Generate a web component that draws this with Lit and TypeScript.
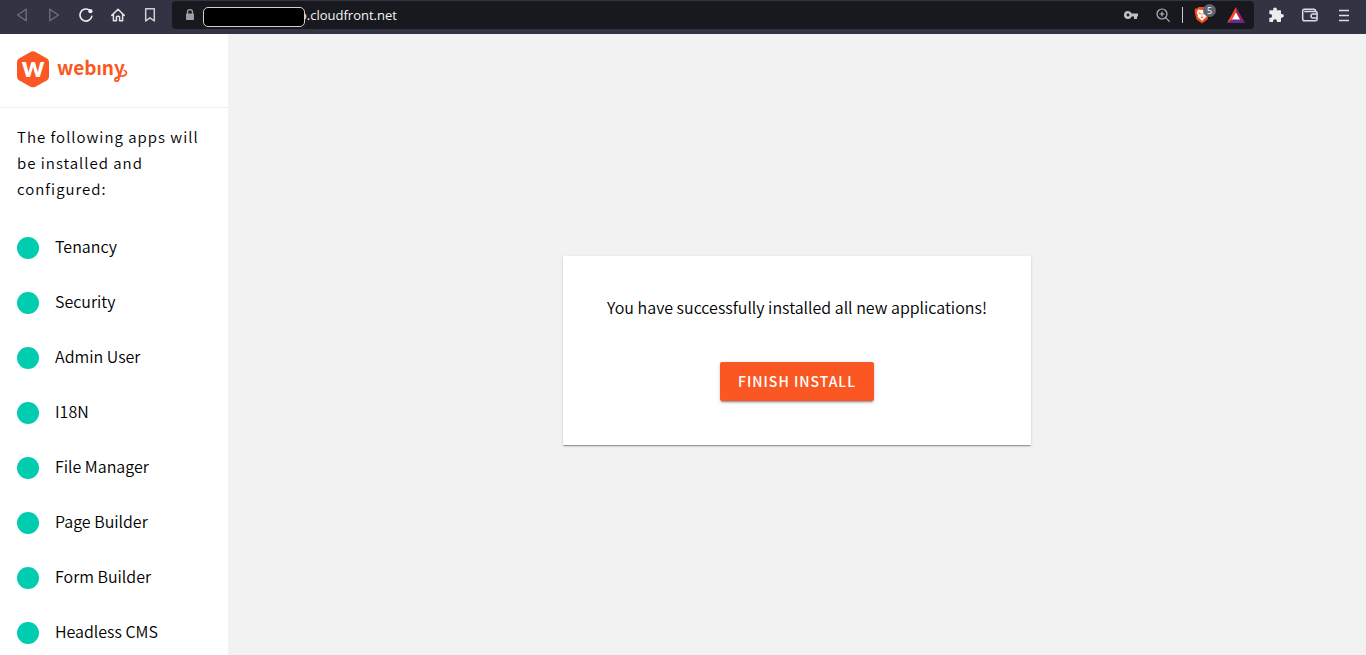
import { LitElement, html, css, svg } from "lit";
import { customElement } from "lit/decorators.js";

const icons = {
  back: svg`<svg width="20" height="20" viewBox="0 0 20 20"><path d="M14.2 4.2v11.6L5.6 10z" fill="none" stroke="#6f717c" stroke-width="1.3" stroke-linejoin="round"/></svg>`,
  forward: svg`<svg width="20" height="20" viewBox="0 0 20 20"><path d="M5.8 4.2v11.6l8.6-5.8z" fill="none" stroke="#6f717c" stroke-width="1.3" stroke-linejoin="round"/></svg>`,
  reload: svg`<svg width="20" height="20" viewBox="0 0 20 20"><path d="M15.8 11.4A6 6 0 1 1 13 4.900" fill="none" stroke="#eeeef0" stroke-width="1.600" stroke-linecap="round"/><circle cx="14.400" cy="6.200" r="2.100" fill="#eeeef0"/></svg>`,
  home: svg`<svg width="20" height="20" viewBox="0 0 20 20"><path d="M3.8 10.4 10 4.3l6.2 6.1M5.4 9.4v6.4h3v-3.6q0-1 1-1h1.200q1 0 1 1v3.600h3V9.400" fill="none" stroke="#e4e4e7" stroke-width="1.5" stroke-linejoin="round" stroke-linecap="round"/></svg>`,
  bookmark: svg`<svg width="20" height="20" viewBox="0 0 20 20"><path d="M5.700 3.800h8.600v12.200L10 12.800 5.700 16z" fill="none" stroke="#cfcfd4" stroke-width="1.500" stroke-linejoin="round"/></svg>`,
  lock: svg`<svg width="12" height="14" viewBox="0 0 12 14"><path d="M3.500 6V4.200a2.500 2.500 0 0 1 5 0V6" fill="none" stroke="#9c9fa8" stroke-width="1.300"/><rect x="2" y="5.500" width="8" height="6.500" rx=".8" fill="#9c9fa8"/></svg>`,
  key: svg`<svg width="16" height="16" viewBox="0 0 16 16"><path fill-rule="evenodd" d="M5 4a4 4 0 1 0 3.700 5.400H11V12h3V9.400h1V6.600H8.700A4 4 0 0 0 5 4zm0 2.600a1.400 1.400 0 1 1 0 2.800 1.400 1.400 0 0 1 0-2.800z" fill="#bdbfc5"/></svg>`,
  zoom: svg`<svg width="16" height="16" viewBox="0 0 16 16"><g fill="none" stroke="#b4b6bc" stroke-width="1.200" stroke-linecap="round"><circle cx="7" cy="7" r="5"/><path d="M10.700 10.700 14.300 14.300M7 5v4M5 7h4"/></g></svg>`,
  shield: svg`<svg width="16" height="18" viewBox="0 0 16 18"><path d="M4.500 1h7L13 2.600l1.600-.1 1 2-.7 1.700.2 1-1.700 6.300L8 17.500l-5.400-4L.9 7.200l.2-1-.7-1.700 1-2 1.600.1z" fill="#fb4b12"/><path d="m4.200 3.600 3.800.5 3.800-.5 1.500 2.600-1.300 3.200.3 1.500-2.200 1.800L8 15l-2.100-2.300-2.200-1.800.3-1.500-1.300-3.200z" fill="#fff"/><path d="m4.600 6.800 2 .6-.5.900zM11.400 6.800l-2 .6.5.9zM8 7v3M6.800 11.200 8 10.700l1.200.5L8 12z" fill="#fb4b12" stroke="#fb4b12" stroke-width=".5"/></svg>`,
  bat: svg`<svg width="18" height="16" viewBox="0 0 18 16"><path d="M9 0 0 16l9-5z" fill="#ff4724"/><path d="m9 0 9 16-9-5z" fill="#9e1f63"/><path d="M0 16h18l-9-5.500z" fill="#662d91"/><path d="m9 5.500 4 7H5z" fill="#fff"/></svg>`,
  puzzle: svg`<svg width="18" height="18" viewBox="0 0 18 18"><path d="M3 4.200h3.400C5.800 2.700 6.700 1.500 8 1.500s2.300 1.200 1.700 2.700h3.600q.7 0 .7.700v3.200c1.600-.6 2.800.4 2.800 1.700s-1.200 2.300-2.800 1.700v3.800q0 .7-.7.700H9.800c.5-1.600-.5-2.700-1.800-2.700s-2.300 1.100-1.800 2.700H3q-.7 0-.7-.7v-3.500c1.600.5 2.700-.5 2.700-1.800S3.900 7.700 2.300 8.200V4.900q0-.7.700-.7z" fill="#ececee"/></svg>`,
  wallet: svg`<svg width="18" height="18" viewBox="0 0 18 18"><g fill="none" stroke="#dcdce0" stroke-width="1.500" stroke-linejoin="round"><path d="M14.500 5.500V4.800q0-1.600-1.600-1.600H3.200q-1.500 0-1.500 1.500v8.300q0 1.800 1.800 1.800h11q1.600 0 1.600-1.600V7.100q0-1.600-1.600-1.600H3.200"/><path d="M16 8.100h-4a2 2 0 0 0 0 4h4"/></g></svg>`,
  menu: svg`<svg width="18" height="18" viewBox="0 0 18 18"><path d="M4 4.500h10M4 9.500h10M4 14.500h10" stroke="#dcdce0" stroke-width="1.500"/></svg>`,
};

@customElement("browser-bar")
export class BrowserBar extends LitElement {
  static styles = css`
    :host {
      display: flex;
      align-items: flex-start;
      height: 34px;
      padding: 1px 5px 0 6px;
      box-sizing: border-box;
      background: #323443;
      font-family: "Open Sans", "Noto Sans", sans-serif;
    }
    button {
      display: flex;
      align-items: center;
      justify-content: center;
      flex: none;
      height: 28px;
      padding: 0;
      border: 0;
      background: none;
      cursor: pointer;
    }
    svg { display: block; }
    .nav { display: flex; padding-right: 6px; }
    .nav button { width: 32px; }
    .tools { display: flex; padding-left: 5px; }
    .tools button { width: 34px; }
    .address {
      display: flex;
      align-items: center;
      flex: 1;
      min-width: 0;
      height: 28px;
      padding: 0 2px 0 12px;
      box-sizing: border-box;
      border-radius: 4px;
      background: #17191f;
    }
    .address button { width: 32px; }
    .field { position: relative; flex: 1; min-width: 0; display: flex; padding-left: 103px; }
    .field input {
      flex: 1;
      min-width: 0;
      height: 28px;
      padding: 0;
      border: 0;
      outline: 0;
      background: none;
      color: #f4f4f5;
      font: 13px "Open Sans", "Noto Sans", sans-serif;
    }
    .mask {
      position: absolute;
      left: 7px;
      top: 6px;
      width: 102px;
      height: 20px;
      box-sizing: border-box;
      border: 1px solid #d0d0d0;
      border-radius: 5px;
      background: #000;
    }
    .address .lock { width: 12px; }
    .divider { width: 1px; height: 16px; margin: 0 3px; background: #c9cacf; }
    .shield { position: relative; margin: 0 2px 0 0; }
    .badge {
      position: absolute;
      left: 17px;
      top: 3px;
      width: 13px;
      height: 13px;
      border-radius: 50%;
      background: #5f636d;
      color: #fff;
      font: 9px/13px "Open Sans", sans-serif;
      text-align: center;
    }
  `;

  render() {
    return html`
      <div class="nav">
        <button aria-label="Back">${icons.back}</button>
        <button aria-label="Forward">${icons.forward}</button>
        <button aria-label="Reload">${icons.reload}</button>
        <button aria-label="Home">${icons.home}</button>
        <button aria-label="Bookmark">${icons.bookmark}</button>
      </div>
      <div class="address">
        <button class="lock" aria-label="Site information">${icons.lock}</button>
        <div class="field">
          <input type="text" aria-label="Address" value="o.cloudfront.net" />
          <span class="mask"></span>
        </div>
        <button aria-label="Passwords">${icons.key}</button>
        <button aria-label="Zoom">${icons.zoom}</button>
        <span class="divider"></span>
        <button class="shield" aria-label="Shields">${icons.shield}<span class="badge">5</span></button>
        <button aria-label="Rewards">${icons.bat}</button>
      </div>
      <div class="tools">
        <button aria-label="Extensions">${icons.puzzle}</button>
        <button aria-label="Wallet">${icons.wallet}</button>
        <button aria-label="Menu">${icons.menu}</button>
      </div>
    `;
  }
}

@customElement("app-root")
export class AppRoot extends LitElement {
  static styles = css`
    :host {
      display: flex;
      flex-direction: column;
      height: 100vh;
      overflow: hidden;
      color: #000;
      font-family: "Noto Sans CJK SC", "Noto Sans", sans-serif;
      font-size: 16px;
      font-weight: 350;
    }
    browser-bar { flex: none; }
    .page { display: flex; flex: 1; min-height: 0; background: #f2f2f2; }
    .sidebar { flex: none; width: 228px; background: #fff; overflow: hidden; }
    .brand {
      display: block;
      padding: 16px 16px 17px;
      border-bottom: 1px solid #eee;
    }
    .brand svg { display: block; }
    .wordmark { font: 700 19px "Noto Sans CJK SC", sans-serif; fill: #fa5723; }
    .monogram { font: 900 28px Lato, sans-serif; fill: #fff; }
    .intro {
      margin: 0;
      padding: 16px 16px 0 17px;
      font-size: 15px;
      line-height: 26px;
      letter-spacing: 1px;
    }
    .apps { margin: 0; padding: 18px 16px 0 17px; list-style: none; }
    .apps li { display: flex; align-items: center; gap: 16px; height: 55px; }
    .name { line-height: 24px; padding-bottom: 3px; }
    .dot { width: 22px; height: 22px; border-radius: 50%; background: #00ccb0; }
    .main {
      display: flex;
      flex: 1;
      align-items: center;
      justify-content: center;
      padding-top: 12px;
    }
    .card {
      display: flex;
      flex-direction: column;
      align-items: center;
      padding: 39px 44px 44px;
      background: #fff;
      box-shadow: 0 2px 1px -1px rgba(0, 0, 0, 0.2), 0 1px 1px rgba(0, 0, 0, 0.14), 0 1px 3px rgba(0, 0, 0, 0.12);
    }
    .card p { margin: 0 0 43px; line-height: 24px; }
    .finish {
      height: 39px;
      padding: 0 18px 1px;
      border: 0;
      border-radius: 2px;
      background: #fa5723;
      color: #fff;
      font: 500 14px "Noto Sans CJK SC", "Noto Sans", sans-serif;
      letter-spacing: 1px;
      box-shadow: 0 3px 1px -2px rgba(0, 0, 0, 0.2), 0 2px 2px rgba(0, 0, 0, 0.14), 0 1px 5px rgba(0, 0, 0, 0.12);
      cursor: pointer;
    }
  `;

  private apps = ["Tenancy", "Security", "Admin User", "I18N", "File Manager", "Page Builder", "Form Builder", "Headless CMS"];

  render() {
    return html`
      <browser-bar></browser-bar>
      <div class="page">
        <aside class="sidebar">
          <a class="brand" href="#" aria-label="webiny">
            <svg width="116" height="40" viewBox="0 0 116 40">
              <path d="M14.500 2q2.500-1.300 5 0L31 8.600q2 1.300 2 3.600v14.600q0 2.300-2 3.500L19.500 36.700q-2.500 1.300-5 0L3 30.300q-2-1.200-2-3.500V12.200Q1 9.900 3 8.600z" fill="#fa5723" />
              <text class="monogram" x="17" y="27" text-anchor="middle">w</text>
              <text class="wordmark" x="41" y="25">webıny</text>
              <path d="M103 26c4 .6 7.500-.6 7.500-3.200 0-1.200-.8-2-2-2.300M99.500 28.500c-2.500 2.500 3 4.500 3.500 0" fill="none" stroke="#fa5723" stroke-width="1.800" stroke-linecap="round" />
            </svg>
          </a>
          <p class="intro">The following apps will be installed and configured:</p>
          <ul class="apps">
            ${this.apps.map((name) => html`<li><span class="dot"></span><span class="name">${name}</span></li>`)}
          </ul>
        </aside>
        <main class="main">
          <section class="card">
            <p>You have successfully installed all new applications!</p>
            <button class="finish">FINISH INSTALL</button>
          </section>
        </main>
      </div>
    `;
  }
}
